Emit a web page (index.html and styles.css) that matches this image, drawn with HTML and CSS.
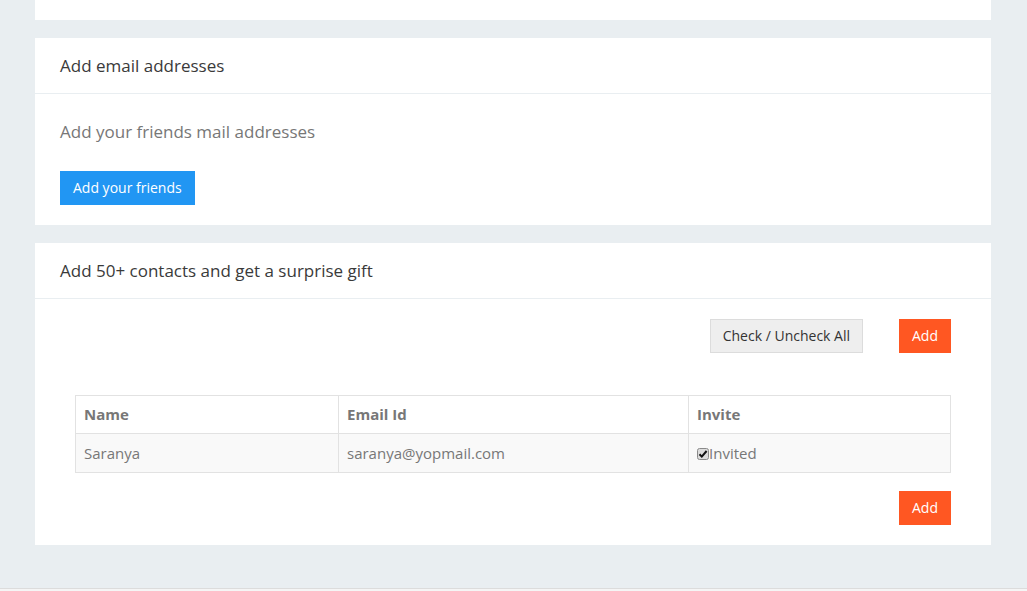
FILE: index.html
```html
<!DOCTYPE html>
<html>
<head>
<meta charset="utf-8">
<link rel="stylesheet" href="styles.css">
</head>
<body>
<div class="page">
  <div class="card card-top"></div>

  <div class="card">
    <div class="card-head">Add email addresses</div>
    <div class="card-body">
      <p class="lead">Add your friends mail addresses</p>
      <button class="btn btn-blue">Add your friends</button>
    </div>
  </div>

  <div class="card">
    <div class="card-head">Add 50+ contacts and get a surprise gift</div>
    <div class="card-body inset">
      <div class="actions">
        <button class="btn btn-light">Check / Uncheck All</button>
        <button class="btn btn-orange">Add</button>
      </div>
      <table class="contacts">
        <thead>
          <tr><th class="c1">Name</th><th class="c2">Email Id</th><th>Invite</th></tr>
        </thead>
        <tbody>
          <tr>
            <td>Saranya</td>
            <td>saranya@yopmail.com</td>
            <td><span class="check"><svg width="12" height="12" viewBox="0 0 12 12"><rect x="0.5" y="0.5" width="11" height="11" rx="2" fill="#dcdcdc" stroke="#8a8a8a"/><path d="M2.5 6.2 L4.8 8.6 L9.6 3" fill="none" stroke="#111" stroke-width="2"/></svg></span>Invited</td>
          </tr>
        </tbody>
      </table>
      <div class="actions bottom">
        <button class="btn btn-orange">Add</button>
      </div>
    </div>
  </div>
</div>
<div class="footer"></div>
</body>
</html>
```

FILE: styles.css
```css
html, body {
  margin: 0;
  padding: 0;
}
body {
  background: #e9eef1;
  font-family: "Open Sans", "Noto Sans", sans-serif;
  color: #333;
}
.page {
  width: 956px;
  margin-left: 35px;
  padding-bottom: 43px;
  display: flex;
  flex-direction: column;
  gap: 18px;
}
.card {
  background: #fff;
}
.card-top {
  height: 20px;
}
.card-head {
  padding: 16px 25px;
  font-size: 17px;
  line-height: 23px;
  color: #3a3a3a;
  border-bottom: 1px solid #e9eef1;
}
.card-body {
  padding: 25px 25px 20px;
}
.lead {
  margin: 0 0 26px;
  font-size: 17px;
  line-height: 26px;
  color: #777;
}
.btn {
  font-family: inherit;
  font-size: 14px;
  line-height: 20px;
  padding: 7px 13px;
  border: 0;
  cursor: pointer;
  display: inline-block;
}
.btn-blue {
  background: #2196f3;
  color: #fff;
}
.btn-orange {
  background: #ff5722;
  color: #fff;
  padding: 7px 13px;
}
.btn-light {
  background: #eeeeee;
  color: #333;
  border: 1px solid #dcdcdc;
  padding: 6px 12px;
}
.card-body.inset {
  padding: 20px 40px 20px 40px;
}
.actions {
  display: flex;
  justify-content: flex-end;
  gap: 36px;
}
.actions.bottom {
  margin-top: 18px;
}
.contacts {
  margin-top: 42px;
  width: 100%;
  border-collapse: collapse;
  font-size: 15px;
  color: #777;
}
.contacts th, .contacts td {
  border: 1px solid #e2e2e2;
  padding: 8px 8px;
  line-height: 21px;
  text-align: left;
}
.contacts td {
  line-height: 22px;
}
.contacts th {
  font-weight: 700;
}
.contacts th.c1 { width: 246px; }
.contacts th.c2 { width: 333px; }
.contacts tbody tr {
  background: #f9f9f9;
}
.check {
  display: inline-block;
  vertical-align: -1px;
  line-height: 0;
}
.footer {
  border-top: 1px solid #dcdcdc;
  background: #f5f5f5;
  height: 10px;
}
```
